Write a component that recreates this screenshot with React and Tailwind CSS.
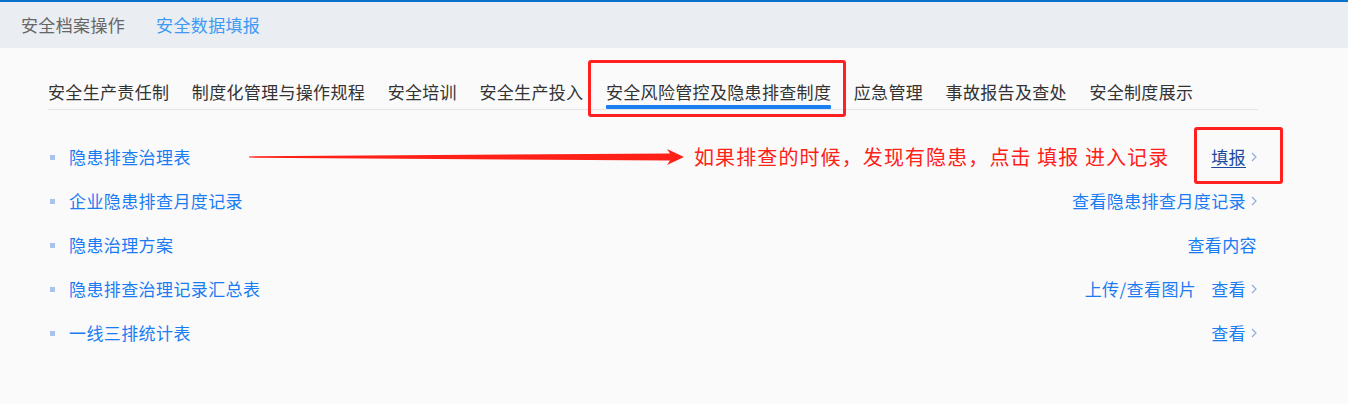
import React from "react";

const Chevron = () => (
  <svg width="6" height="10" viewBox="0 0 6 10" className="shrink-0">
    <path d="M1 1 L5 5 L1 9" fill="none" stroke="#8fa9d6" strokeWidth="1.1" />
  </svg>
);

const tabs = [
  "安全生产责任制",
  "制度化管理与操作规程",
  "安全培训",
  "安全生产投入",
  "安全风险管控及隐患排查制度",
  "应急管理",
  "事故报告及查处",
  "安全制度展示",
];

const rows = [
  { name: "隐患排查治理表", actions: [{ t: "填报", chev: true, u: true }] },
  { name: "企业隐患排查月度记录", actions: [{ t: "查看隐患排查月度记录", chev: true }] },
  { name: "隐患治理方案", actions: [{ t: "查看内容", chev: false }] },
  {
    name: "隐患排查治理记录汇总表",
    actions: [
      { t: "上传/查看图片", chev: false },
      { t: "查看", chev: true },
    ],
  },
  { name: "一线三排统计表", actions: [{ t: "查看", chev: true }] },
];

export default function App() {
  return (
    <div className="min-h-[404px] w-[1348px] bg-[#fafafa] font-['Noto_Sans_CJK_SC',sans-serif] overflow-hidden">
      <div className="h-[2px] bg-[#0b72cc]" />
      <div className="h-[46px] bg-[#eaedf1] flex items-center pl-[21px] gap-[31px] text-[17px] tracking-[0.35px]">
        <span className="text-[#666666]">安全档案操作</span>
        <span className="text-[#3d9af5]">安全数据填报</span>
      </div>

      <div className="ml-[48px] w-[1210px]">
        <div className="pt-[32px] flex gap-[22.5px] border-b border-[#e3e5ea] text-[17px] tracking-[0.33px] text-[#333333]">
          {tabs.map((t, i) => (
            <div key={t} className="relative flex flex-col">
              <span className="leading-[24px] whitespace-nowrap">{t}</span>
              <div className={"mt-[1px] h-[4px] rounded-[1px] " + (i === 4 ? "bg-[#1a7ff0]" : "bg-transparent")} />
              {i === 4 && (
                <div className="absolute left-[-18px] top-[-20px] w-[258px] h-[57px] border-[3px] border-[#ff2020] rounded-[3px]" />
              )}
            </div>
          ))}
        </div>

        <div className="mt-[25px] flex flex-col">
          {rows.map((r, i) => (
            <div key={r.name} className="relative h-[44px] flex items-center text-[17px] tracking-[0.4px]">
              <span className="ml-[2px] w-[5px] h-[5px] bg-[#a9c3ea]" />
              <span className="ml-[14px] text-[#1a7cf2] whitespace-nowrap">{r.name}</span>
              <div className="ml-auto mr-[1px] flex items-center gap-[15px]">
                {r.actions.map((a) => (
                  <span key={a.t} className="flex items-center gap-[5px]">
                    <span
                      className={
                        a.u
                          ? "text-[#1b4a9c] underline underline-offset-[3px] decoration-[1px]"
                          : "text-[#1a7cf2]"
                      }
                    >
                      {a.t}
                    </span>
                    {a.chev && <Chevron />}
                  </span>
                ))}
              </div>
              {i === 0 && (
                <>
                  <svg
                    className="absolute left-[200px] top-[12px]"
                    width="440"
                    height="20"
                    viewBox="200 0 440 20"
                  >
                    <polygon
                      points="201,9.4 201,10.6 622,13.5 619,18 636,10 619,2 622,6.5"
                      fill="#ff2018"
                    />
                  </svg>
                  <span className="absolute left-[646px] top-[7px] text-[20px] leading-[30px] tracking-[1.1px] text-[#ff2018] whitespace-nowrap">
                    如果排查的时候，发现有隐患，点击 填报 进入记录
                  </span>
                  <div className="absolute left-[1146px] top-[-8px] w-[89px] h-[57px] border-[3px] border-[#ff2020] rounded-[3px]" />
                </>
              )}
            </div>
          ))}
        </div>
      </div>
    </div>
  );
}
